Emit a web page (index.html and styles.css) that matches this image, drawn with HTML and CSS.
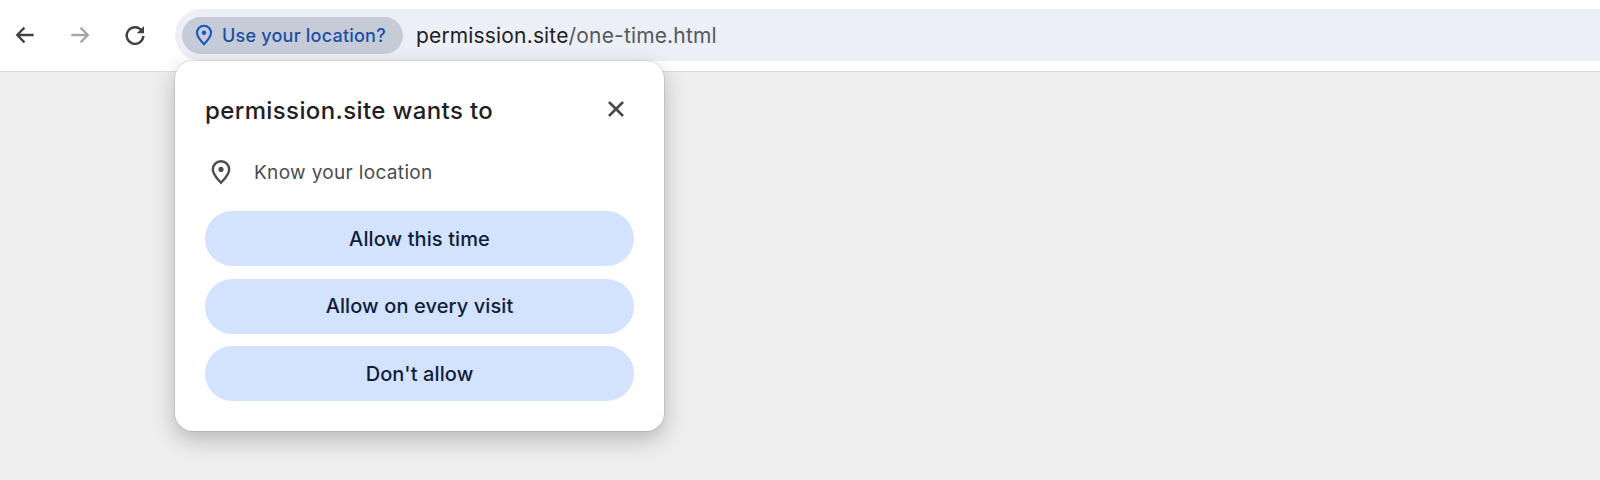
FILE: index.html
```html
<!DOCTYPE html>
<html lang="en">
<head>
<meta charset="utf-8">
<title>permission.site</title>
<link rel="stylesheet" href="styles.css">
</head>
<body>
<header class="toolbar">
  <nav class="nav">
    <svg class="nav-icon" viewBox="0 0 24 24"><path class="ic-dark" d="M20 12H5M11.500 5.200 4.800 12l6.700 6.800"/></svg>
    <svg class="nav-icon" viewBox="0 0 24 24"><path class="ic-grey" d="M4 12h15M12.500 5.200l6.700 6.800-6.700 6.800"/></svg>
    <svg class="nav-icon" viewBox="0 0 24 24"><path class="ic-dark ic-heavy" d="M18.400 8.200A7.700 7.700 0 1 0 19.700 12.800"/><path class="ic-fill" d="M20.300 3.700v6.600h-6.600z"/></svg>
  </nav>
  <div class="omnibox">
    <div class="chip">
      <svg class="pin pin-blue" viewBox="0 0 24 24"><path d="M12 2.800a7 7 0 0 0-7 7c0 4.400 4.600 8.800 7 11.400 2.400-2.600 7-7 7-11.400a7 7 0 0 0-7-7z"/><circle cx="12" cy="9.800" r="2.200"/></svg>
      <span class="chip-label">Use your location?</span>
    </div>
    <div class="url"><span class="host">permission.site</span><span class="path">/one-time.html</span></div>
  </div>
</header>
<main class="content"></main>
<section class="popup">
  <div class="popup-head">
    <h1 class="title">permission.site wants to</h1>
    <svg class="close" viewBox="0 0 24 24"><path d="M5.500 5.500l13 13M18.500 5.500l-13 13"/></svg>
  </div>
  <div class="perm">
    <svg class="pin pin-grey" viewBox="0 0 24 24"><path d="M12 2.800a7 7 0 0 0-7 7c0 4.400 4.600 8.800 7 11.400 2.400-2.600 7-7 7-11.400a7 7 0 0 0-7-7z"/><circle cx="12" cy="9.800" r="2.200"/></svg>
    <span class="perm-label">Know your location</span>
  </div>
  <div class="actions">
    <button class="btn">Allow this time</button>
    <button class="btn">Allow on every visit</button>
    <button class="btn">Don't allow</button>
  </div>
</section>
</body>
</html>
```
FILE: styles.css
```css
* { box-sizing: border-box; }
html, body { margin: 0; height: 100%; }
body {
  width: 1600px;
  height: 480px;
  overflow: hidden;
  background: #eeeeee;
  font-family: Inter, "Liberation Sans", sans-serif;
  display: flex;
  flex-direction: column;
}
.toolbar {
  height: 72px;
  flex: none;
  background: #ffffff;
  border-bottom: 1px solid #dcdcdc;
  display: flex;
  align-items: flex-start;
  padding-top: 9px;
}
.nav {
  width: 175px;
  height: 52px;
  flex: none;
  display: flex;
  align-items: center;
  gap: 29px;
  padding-left: 12px;
}
.nav-icon { width: 26px; height: 26px; flex: none; margin-top: -1px; }
.ic-dark, .ic-grey { fill: none; stroke-width: 2.100; }
.ic-dark { stroke: #3f4143; }
.ic-grey { stroke: #a3a5a7; }
.ic-heavy { stroke-width: 2.200; }
.ic-fill { fill: #3f4143; }
.omnibox {
  flex: 1;
  height: 52px;
  background: #edeff7;
  border-radius: 26px 0 0 26px;
  display: flex;
  align-items: center;
  padding-left: 7px;
  gap: 13px;
}
.chip {
  width: 221px;
  height: 37px;
  border-radius: 19px;
  background: #c6cbd8;
  display: flex;
  align-items: center;
  padding-left: 10px;
  gap: 6px;
}
.pin { flex: none; fill: none; stroke-width: 2.100; }
.pin circle { stroke: none; }
.pin-blue { width: 24px; height: 24px; stroke: #1558c0; }
.pin-blue circle { fill: #1558c0; }
.pin-grey { width: 28px; height: 28px; stroke: #4a4c4f; margin-left: 2px; }
.pin-grey circle { fill: #4a4c4f; }
.chip-label { font-size: 18px; letter-spacing: 0.22px; font-weight: 500; color: #1b4fa5; white-space: nowrap; }
.url { font-size: 21px; letter-spacing: 0.16px; white-space: nowrap; }
.host { color: #1f2124; }
.path { color: #55585c; }
.content { flex: 1; }
.popup {
  position: absolute;
  left: 175px;
  top: 61px;
  width: 489px;
  height: 370px;
  background: #ffffff;
  border-radius: 18px;
  box-shadow: 0 0 0 1px rgba(0, 0, 0, 0.08), 0 8px 22px rgba(0, 0, 0, 0.24);
  padding: 32px 30px 0 30px;
}
.popup-head {
  display: flex;
  align-items: center;
  justify-content: space-between;
  height: 36px;
}
.title { margin: -2px 0 0; font-size: 24px; letter-spacing: 0.38px; font-weight: 500; color: #1f2023; white-space: nowrap; }
.close { width: 26px; height: 26px; fill: none; stroke: #47494c; stroke-width: 2.400; margin: -4px 5px 0 0; }
.perm {
  display: flex;
  align-items: center;
  height: 36px;
  margin-top: 25px;
  gap: 19px;
}
.perm-label { font-size: 19px; letter-spacing: 0.34px; color: #4a4c4f; white-space: nowrap; }
.actions { display: flex; flex-direction: column; gap: 12.500px; margin-top: 21px; }
.btn {
  height: 55px;
  border: 0;
  border-radius: 28px;
  background: #d3e2fd;
  color: #0f1d3d;
  font: 500 20px Inter, "Liberation Sans", sans-serif;
  letter-spacing: 0.1px;
  padding-top: 1px;
}
```
